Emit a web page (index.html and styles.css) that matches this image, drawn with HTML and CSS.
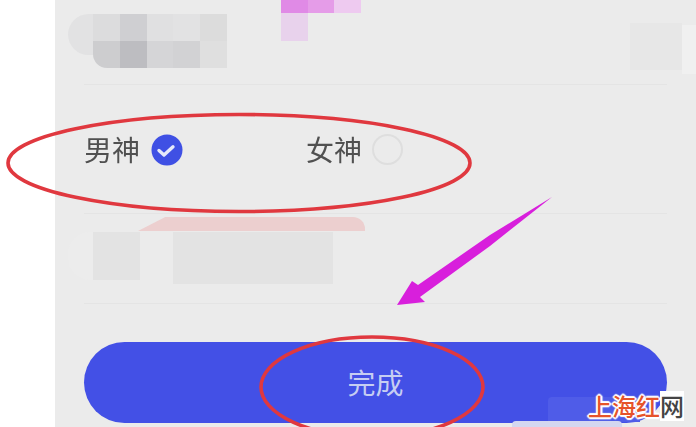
FILE: index.html
```html
<!DOCTYPE html>
<html lang="zh-CN">
<head>
<meta charset="utf-8">
<title>完成资料</title>
<link rel="stylesheet" href="styles.css">
</head>
<body>
<div class="page">
  <div class="gutter"></div>
  <main class="panel">
    <section class="row row-top">
      <div class="mosaic mosaic-top">
        <span class="cap cap-top"></span>
        <div class="cells cells-top">
          <i class="g1"></i><i class="g2"></i><i class="g3"></i><i class="g8"></i><i class="g4"></i>
          <i class="g5 g-round"></i><i class="g6"></i><i class="g7"></i><i class="g9"></i><i class="g10"></i>
        </div>
      </div>
    </section>
    <section class="row row-gender">
      <div class="option option-male">
        <span class="label">男神</span>
        <svg class="check" width="32" height="32" viewBox="0 0 32 32" aria-hidden="true">
          <circle cx="16" cy="16" r="15.5" fill="#3f50e4"/>
          <path d="M8 16.5l5 4.5 9-8.2" fill="none" stroke="#e6e9fa" stroke-width="3.4" stroke-linecap="round" stroke-linejoin="round"/>
        </svg>
      </div>
      <div class="option">
        <span class="label">女神</span>
        <span class="radio"></span>
      </div>
    </section>
    <section class="row row-name">
      <div class="mosaic mosaic-name">
        <span class="cap cap-name"></span>
        <span class="block block-a"></span>
        <span class="block block-b"></span>
      </div>
    </section>
    <button class="done" type="button">完成</button>
  </main>

  <div class="blot pink-1"></div>
  <div class="blot pink-2"></div>
  <div class="blot pink-3"></div>
  <div class="blot pink-4"></div>
  <div class="blot side-1"></div>
  <div class="blot side-2"></div>
  <div class="blot pink-strip"></div>
  <div class="blot glare-1"></div>
  <div class="blot glare-2"></div>

  <svg class="marks" width="696" height="427" viewBox="0 0 696 427" aria-hidden="true">
    <ellipse cx="239" cy="163" rx="231" ry="48.5" fill="none" stroke="#e0383f" stroke-width="3.6"/>
    <ellipse cx="372" cy="387" rx="111" ry="50" fill="none" stroke="#e0383f" stroke-width="3.6"/>
    <path d="M552 197L490 246 420 297 425 302 397 305 412 281 418 285 490 235Z" fill="#d81fdc"/>
  </svg>

  <div class="watermark"><span class="wm-red">上海红</span><span class="wm-dark">网</span></div>
</div>
</body>
</html>
```
FILE: styles.css
```css
* { box-sizing: border-box; }
html, body { margin: 0; padding: 0; background: #fff; }
body { font-family: "Noto Sans CJK SC", "Noto Sans", sans-serif; }

.page {
  position: relative;
  display: flex;
  width: 696px;
  height: 427px;
  overflow: hidden;
}
.gutter { width: 55px; flex: none; background: #fff; }
.panel {
  flex: 1;
  display: flex;
  flex-direction: column;
  padding: 0 29px;
  background: #ebebeb;
}

.row { border-bottom: 1px solid #e4e4e4; flex: none; }
.row-top { height: 85px; padding-top: 14px; }
.row-gender { height: 129px; display: flex; align-items: flex-start; padding-top: 48px; gap: 123px; }
.row-name { height: 90px; padding-top: 18px; }

.mosaic { display: flex; margin-left: -16px; filter: blur(.7px); }
.cap { flex: none; width: 25px; border-radius: 22px 0 0 22px; }
.cap-top { height: 41px; background: #e2e2e3; }
.cap-name { height: 48px; width: 25px; background: #ececec; }

.cells { display: grid; }
.cells-top { grid-template-columns: repeat(5, 26.8px); grid-auto-rows: 27px; }
.cells-top i { display: block; }
.g1 { background: #dcdcdd; }
.g2 { background: #cfcfd2; }
.g3 { background: #e0e0e1; }
.g8 { background: #e2e2e3; }
.g4 { background: #dcdcdc; }
.g5 { background: #cdcdcf; }
.g-round { border-radius: 0 0 0 14px; }
.g6 { background: #bdbdc1; }
.g7 { background: #d5d5d7; }
.g9 { background: #d2d2d4; }
.g10 { background: #dfdfdf; }

.mosaic-name { align-items: flex-start; }
.block { display: block; background: #e3e3e3; }
.block-a { width: 47px; height: 48px; margin-right: 33px; }
.block-b { width: 160px; height: 52px; }

.option { display: flex; align-items: center; gap: 10px; height: 32px; }
.option-male { gap: 11px; }
.label {
  font-size: 28px;
  line-height: 32px;
  color: #505050;
  filter: blur(.5px);
}
.check { flex: none; display: block; margin-top: 2px; filter: blur(.5px); }
.radio {
  flex: none;
  width: 31px;
  height: 31px;
  margin-top: 1px;
  border-radius: 50%;
  border: 2px solid #dedede;
}

.done {
  margin-top: 38px;
  height: 81px;
  width: 100%;
  flex: none;
  border: 0;
  border-radius: 41px;
  background: #4350e6;
  color: #c6cdf2;
  font: 28px/81px "Noto Sans CJK SC", "Noto Sans", sans-serif;
  padding: 0;
}

.blot { position: absolute; }
.pink-1 { left: 281px; top: 0; width: 27px; height: 13px; background: #e08ae6; }
.pink-2 { left: 308px; top: 0; width: 26px; height: 13px; background: #e59ce8; }
.pink-3 { left: 334px; top: 0; width: 27px; height: 13px; background: #eecaf0; }
.pink-4 { left: 281px; top: 13px; width: 27px; height: 28px; background: #e8d2ec; }
.side-1 { left: 630px; top: 23px; width: 52px; height: 47px; background: #e7e7e7; }
.side-2 { left: 682px; top: 25px; width: 14px; height: 49px; background: #f0f0f0; }
.pink-strip {
  left: 138px;
  top: 217px;
  width: 227px;
  height: 14px;
  background: #eccfcf;
  border-radius: 0 12px 0 0;
  clip-path: polygon(12% 0, 100% 0, 100% 100%, 0 100%);
}
.glare-1 { left: 548px; top: 397px; width: 92px; height: 25px; background: #4f5ce8; border-radius: 4px 0 0 0; }
.glare-2 { left: 512px; top: 421px; width: 110px; height: 6px; background: #d4d7f0; border-radius: 4px 4px 0 0; }

.marks { position: absolute; left: 0; top: 0; display: block; filter: blur(.4px); }

.watermark {
  position: absolute;
  left: 588px;
  top: 389px;
  display: flex;
  font: 500 24px/34px "Noto Sans CJK SC", sans-serif;
  white-space: nowrap;
}
.wm-red {
  color: #e6532a;
  text-shadow: 0 0 2px #fff, 2px 0 1px #fff, -2px 0 1px #fff, 0 2px 1px #fff, 0 -2px 1px #fff, 1px 1px 1px #fff, -1px -1px 1px #fff, 1px -1px 1px #fff, -1px 1px 1px #fff;
}
.wm-dark {
  color: #444;
  background: #fff;
  line-height: 30px;
  height: 30px;
  margin-top: 2px;
}
```
